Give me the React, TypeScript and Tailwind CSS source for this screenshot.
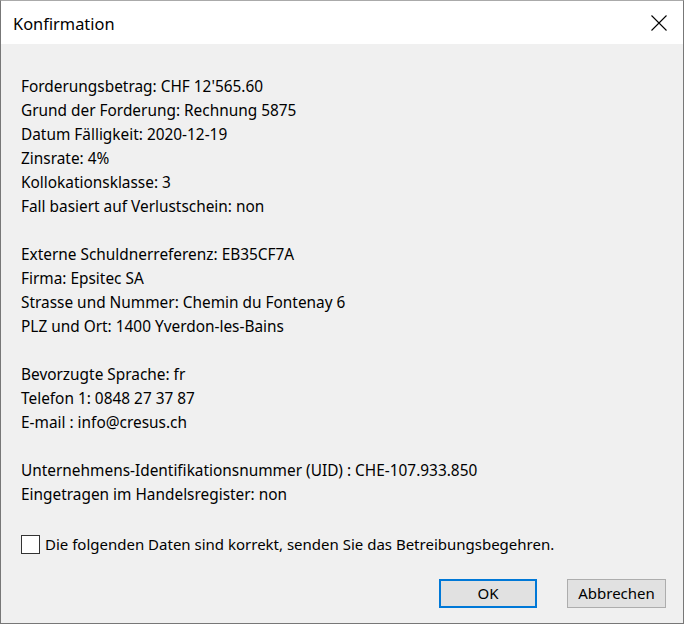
import React from "react";

const groups: string[][] = [
  [
    "Forderungsbetrag: CHF 12'565.60",
    "Grund der Forderung: Rechnung 5875",
    "Datum Fälligkeit: 2020-12-19",
    "Zinsrate: 4%",
    "Kollokationsklasse: 3",
    "Fall basiert auf Verlustschein: non",
  ],
  [
    "Externe Schuldnerreferenz: EB35CF7A",
    "Firma: Epsitec SA",
    "Strasse und Nummer: Chemin du Fontenay 6",
    "PLZ und Ort: 1400 Yverdon-les-Bains",
  ],
  ["Bevorzugte Sprache: fr", "Telefon 1: 0848 27 37 87", "E-mail : info@cresus.ch"],
  ["Unternehmens-Identifikationsnummer (UID) : CHE-107.933.850", "Eingetragen im Handelsregister: non"],
];

export default function App() {
  return (
    <div
      className="w-[684px] h-[624px] flex flex-col bg-[#f0f0f0] border border-[#777777] border-t-[#aaaaaa] text-[#000000] overflow-hidden"
      style={{ fontFamily: '"Segoe UI", "Noto Sans", sans-serif' }}
    >
      <div className="h-[43px] bg-white flex items-center justify-between pl-[12px] pr-[16px] shrink-0">
        <span className="text-[16.4px] leading-[24px] pt-[2px]">Konfirmation</span>
        <svg width="16" height="16" viewBox="0 0 16 16">
          <path d="M0.5 0.5 L15.5 15.5 M15.5 0.5 L0.5 15.5" stroke="#000" strokeWidth="1.1" fill="none" />
        </svg>
      </div>
      <div className="flex-1 flex flex-col pl-[20px] pr-[16px] pt-[31px]">
        <div className="flex flex-col gap-[24px] text-[15.4px] leading-[24px]">
          {groups.map((g, i) => (
            <div key={i} className="flex flex-col">
              {g.map((l) => (
                <div key={l} className="whitespace-nowrap">
                  {l}
                </div>
              ))}
            </div>
          ))}
        </div>
        <label className="flex items-center gap-[5px] mt-[25px] h-[24px] text-[15px]">
          <span className="w-[19px] h-[19px] border border-[#333333] bg-white shrink-0"></span>
          <span className="whitespace-nowrap">Die folgenden Daten sind korrekt, senden Sie das Betreibungsbegehren.</span>
        </label>
        <div className="flex justify-end gap-[30px] mt-[23px] pr-[1px]">
          <button className="w-[98px] h-[29px] border-2 border-[#0078d7] bg-[#e1e1e1] text-[15px]">OK</button>
          <button className="w-[99px] h-[29px] border border-[#adadad] bg-[#e1e1e1] text-[15px]">Abbrechen</button>
        </div>
      </div>
    </div>
  );
}
